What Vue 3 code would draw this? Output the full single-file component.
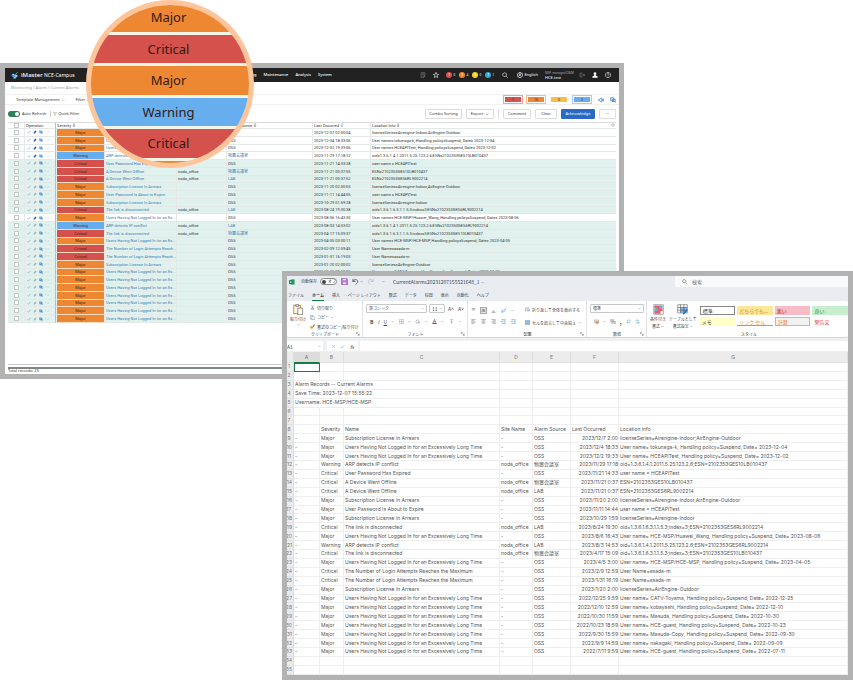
<script setup>
import { h } from 'vue'

// Glyphs on a 16 x 16 grid: [path, fill, stroke, stroke width]
const glyphs = {
  brand: [['M8 7L15 1M8 8L6 15', 'none', '#5bb0f5', 2], ['M5 4a3.5 3.5 0 1 0 .1 0M12 6a3 3 0 1 0 .1 0M9 11a2 2 0 1 0 .1 0', '#8fd0ff', 'none', 0], ['M1 6l5 1-2 5z', '#2f7fe0', 'none', 0]],
  page: [['M3 2h10v9l-3 3H3zM6 5h5M6 8h4M13 11h-3v3', 'none', 'currentColor', 1.3]],
  star: [['M8 1l2 5 5 .4-4 3.4 1.3 5L8 12l-4.300 2.800L5 9.800 1 6.400 6 6z', 'none', 'currentColor', 1.6]],
  search: [['M7 2a5 5 0 1 0 .1 0M11 11l4 4', 'none', 'currentColor', 1.7]],
  globe: [['M8 1a7 7 0 1 0 .1 0M2 13L14 3M4 4l8 9M8 2v5', 'none', 'currentColor', 1.6]],
  exit: [['M9 3H3v10h6M7 8h8M12 5l3 3-3 3', 'none', 'currentColor', 1.3]],
  user: [['M8 1a3.500 3.500 0 0 1 2 6.500L10 9l5 3v3H1v-3l5-3V7.500A3.500 3.500 0 0 1 8 1', 'currentColor', 'none', 0]],
  help: [['M8 1a7 7 0 1 0 .1 0M6 6.500C6 3 10.500 3.500 10.500 6.500 10.500 8 8 8 8 10M8 11.500v1.500', 'none', 'currentColor', 1.5]],
  speaker: [['M2 6h3l4-4v12l-4-4H2zM12 5v6M14.500 4v8', 'none', 'currentColor', 1.7]],
  link: [['M2 2h8v8H2zM6 6h8v6H6zM12 12l3 3', 'none', 'currentColor', 2]],
  funnel: [['M1 2h14L9.500 8v6l-3-2V8z', 'none', 'currentColor', 1.4]],
  down: [['M3 6l5 5 5-5', 'none', 'currentColor', 1.8]],
  sort: [['M8 1v13M4 10l4 4 4-4', 'none', 'currentColor', 2]],
  check: [['M2 9l4 4 8-10', 'none', 'currentColor', 2]],
  broom: [['M9 2l5 4-4 5-3 3-6-1 3-4z', 'currentColor', 'none', 0]],
  mask: [['M2 3h8v8H2zM6 6h7v6H6zM11 12l4 3', 'none', 'currentColor', 2]],
  dots: [['M2 7h2v2H2zM7 7h2v2H7zM12 7h2v2h-2z', 'currentColor', 'none', 0]],
  gear: [['M8 2a6 6 0 1 0 .1 0M8 6a2 2 0 1 0 .1 0', 'none', 'currentColor', 1.5]],
  excel: [['M5 1h10v14H5z', '#21a366', 'none', 0], ['M0 3h9v10H0z', '#107c41', 'none', 0], ['M2.500 5l4 6M6.500 5l-4 6', 'none', '#fff', 1.4]],
  save: [['M1 1h12l2 2v12H1z', '#c58ad8', '#8e44ad', 1.400], ['M4 1h8v5H4zM4 9h8v6H4z', '#f7ecfa', '#8e44ad', 1]],
  undo: [['M2 2v6h6M2 8c4-7 12-5 11 1-.5 3-3 4-5 6', 'none', 'currentColor', 1.7]],
  redo: [['M14 2v6H8M14 8C10 1 2 3 3 9c.5 3 3 4 5 6', 'none', 'currentColor', 1.7]],
  paste: [['M1 2h10v12H1z', '#fff4e3', '#e0963c', 1.500], ['M4 .5h4v3H4z', '#ddd', '#777', 1], ['M7 6h7v9.500H7z', '#fff', '#666', 1]],
  cut: [['M5 1l5 10M11 1L6 11', 'none', '#555', 1.300], ['M5 11a2 2 0 1 0 .1 0M11 11a2 2 0 1 0 .1 0', 'none', '#3a78b8', 1.500]],
  copy: [['M1 1h8v12H1z', '#fff', '#666', 1.300], ['M6 4h6l3 3v8H6z', '#fff', '#3a78b8', 1.400]],
  brush: [['M9 7l5-6 1 2-4 6z', '#777', '#555', 1], ['M2 7l7 0 2 3-5 5-5-3z', '#f0a24a', '#d17a1d', 1]],
  borders: [['M1 1h14v14H1zM8 1v14M1 8h14', 'none', '#888', 1.300]],
  bucket: [['M3 8l5-6 5 6-5 5z', '#fff', '#555', 1.400], ['M13 9l2 4h-3z', '#3a78b8', 'none', 0], ['M1 15h14', 'none', '#e8d36a', 2]],
  fontColor: [['M4 11L8 1l4 10M5.500 8h5', 'none', '#444', 1.600], ['M1 12h14v4H1z', '#e02b2b', 'none', 0]],
  phonetic: [['M4 2h8M8 2v4M4 9h8M8 9v6', 'none', '#777', 1.500]],
  alignTop: [['M2 2h12M4 6h8', 'none', '#555', 1.600]],
  alignMid: [['M2 5h12M4 8h8M2 11h12', 'none', '#555', 1.600]],
  alignBottom: [['M4 10h8M2 14h12', 'none', '#555', 1.600]],
  left: [['M1 2h14M1 6h9M1 10h14M1 14h9', 'none', '#555', 1.500]],
  center: [['M1 2h14M4 6h8M1 10h14M4 14h8', 'none', '#555', 1.500]],
  right: [['M1 2h14M6 6h9M1 10h14M6 14h9', 'none', '#555', 1.500]],
  rotate: [['M2 10a3 3 0 1 0 .1 0M6 4v8M9 13l6-10M15 3l-4 1', 'none', '#3a78b8', 1.500]],
  outdent: [['M1 2h14M8 6h7M8 10h7M1 14h14M6 8H1M3 6L1 8l2 2', 'none', '#3a8bb0', 1.500]],
  wrap: [['M2 2v12M5 3h8M5 7h8c3 0 3 5 0 5H8M10 10l-2 2 2 2', 'none', '#3a78b8', 1.600]],
  merge: [['M1 1h14v14H1z', '#d6e8fa', '#3a78b8', 1.500], ['M1 5h14M1 11h14M4 8h8', 'none', '#3a78b8', 1.400]],
  money: [['M1 3h14v8H1z', '#e9e9e9', '#777', 1.300], ['M6 8h8v7H6z', '#f0a24a', '#c9741c', 1]],
  decUp: [['M5 2v4M9 2v4M3 11h10M6 9l-3 2 3 3M13 2v6', 'none', '#3a8bb0', 1.500]],
  decDown: [['M3 2v5M7 2v5M11 2v5M3 12h10M10 9l3 3-3 3', 'none', '#3a8bb0', 1.500]],
  cond: [['M1 1h14v14H1z', '#fff', '#888', 1], ['M2 2h8v4H2zM6 6h8v4H6zM2 10h9v4H2z', '#e2606a', 'none', 0], ['M10 2h4v4h-4zM2 6h4v4H2z', '#6fa5dc', 'none', 0]],
  tableFmt: [['M1 1h14v12H1z', '#fff', '#777', 1], ['M5 5h10v8H5z', '#7db3e6', 'none', 0], ['M1 5h14M1 9h14M5 1v12M10 1v12', 'none', '#555', .9], ['M9 15l6-7', 'none', '#2b6cb0', 2]],
  launch: [['M2 8V2h6M6 6l7 7M13 7v6H7', 'none', '#555', 1.800]],
  cross: [['M3 3l10 10M13 3L3 13', 'none', '#aaa', 1.500]],
}
const Icon = (props) =>
  h('svg', { viewBox: '0 0 16 16', class: 'icon', 'aria-hidden': 'true' },
    glyphs[props.name].map(([d, fill, stroke, w]) => h('path', { d, fill, stroke, 'stroke-width': w })))
Icon.props = ['name']

const LONG = 'Users Having Not Logged In for an Excessively Long Time'
const LOGIN = 'The Number of Login Attempts Reaches the Maximum'
const SUB = 'Subscription License In Arrears'
const OFFLINE = 'A Device Went Offline'
const LINKDOWN = 'The link is disconnected'
const ROOM = '物置会議室'
const suspend = (user, date) => `User name= ${user}, Handling policy=Suspend, Date= ${date}`

const alarms = [
  ['Major', SUB, '-', 'OSS', '2023-12-07 02:00:04', 'licenseSeries=Airengine-Indoor;AirEngine-Outdoor'],
  ['Major', LONG, '-', 'OSS', '2023-12-04 18:33:06', suspend('tokunaga-k', '2023-12-04')],
  ['Major', LONG, '-', 'OSS', '2023-12-02 19:33:06', suspend('HCEAPITest', '2023-12-02')],
  ['Warning', 'ARP detects IP conflict', 'noda_office', ROOM, '2023-11-29 17:18:12', 'oid=1.3.6.1.4.1.2011.5.25.123.2.6;ESN=2102353GES10LB010437'],
  ['Critical', 'User Password Has Expired', '-', 'OSS', '2023-11-21 14:33:28', 'user name = HCEAPITest'],
  ['Critical', OFFLINE, 'noda_office', ROOM, '2023-11-21 00:37:55', 'ESN=2102353GES10LB010437'],
  ['Critical', OFFLINE, 'noda_office', 'LAB', '2023-11-21 00:37:52', 'ESN=2102353GES6RL9002214'],
  ['Major', SUB, '-', 'OSS', '2023-11-20 02:00:03', 'licenseSeries=Airengine-Indoor,AirEngine-Outdoor'],
  ['Major', 'User Password Is About to Expire', '-', 'OSS', '2023-11-11 14:44:05', 'user name = HCEAPITest'],
  ['Major', SUB, '-', 'OSS', '2023-10-29 01:59:28', 'licenseSeries=Airengine-Indoor'],
  ['Critical', LINKDOWN, 'noda_office', 'LAB', '2023-08-24 19:30:38', 'oid=1.3.6.1.6.3.1.1.5.3;index=3;ESN=2102353GES6RL9002214'],
  ['Major', LONG, '-', 'OSS', '2023-08-06 16:43:30', suspend('HCE-MSP/Huawei_Wang', '2023-08-06')],
  ['Warning', 'ARP detects IP conflict', 'noda_office', 'LAB', '2023-08-03 14:53:02', 'oid=1.3.6.1.4.1.2011.5.25.123.2.6;ESN=2102353GES6RL9002214'],
  ['Critical', LINKDOWN, 'noda_office', ROOM, '2023-04-17 15:09:37', 'oid=1.3.6.1.6.3.1.1.5.3;index=3;ESN=2102353GES10LB010437'],
  ['Major', LONG, '-', 'OSS', '2023-04-05 03:00:11', suspend('HCE-MSP/HCE-MSP', '2023-04-05')],
  ['Critical', LOGIN, '-', 'OSS', '2023-02-09 12:59:45', 'User Name=asada-m'],
  ['Critical', LOGIN, '-', 'OSS', '2023-01-31 16:19:03', 'User Name=asada-m'],
  ['Major', SUB, '-', 'OSS', '2023-01-20 02:00:02', 'licenseSeries=AirEngine-Outdoor'],
  ['Major', LONG, '-', 'OSS', '2022-12-25 09:59:02', suspend('CATV-Toyama', '2022-12-25')],
  ['Major', LONG, '-', 'OSS', '2022-12-10 12:59:02', suspend('kobayashi', '2022-12-10')],
  ['Major', LONG, '-', 'OSS', '2022-10-30 11:59:02', suspend('Masuda', '2022-10-30')],
  ['Major', LONG, '-', 'OSS', '2022-10-23 18:59:02', suspend('HCE-guest', '2022-10-23')],
  ['Major', LONG, '-', 'OSS', '2022-09-30 15:59:02', suspend('Masuda-Copy', '2022-09-30')],
  ['Major', LONG, '-', 'OSS', '2022-09-09 14:59:02', suspend('nakagaki', '2022-09-09')],
  ['Major', LONG, '-', 'OSS', '2022-07-11 09:59:02', suspend('HCE-guest', '2022-07-11')],
].map(([severity, name, site, source, time, info], i) => ({
  severity, name, site, source, time, info,
  acked: i > 3 && i !== 11,
  short: name.length > 34 ? name.slice(0, name === LOGIN ? 34 : 36) + '...' : name,
  sheetTime: time.replace(/^(\d+)-0?(\d+)-0?(\d+) 0?(\d+):(\d+).*/, '$1/$2/$3 $4:$5'),
}))

const counters = [
  { tone: 'critical', n: 7 }, { tone: 'major', n: 16 }, { tone: 'minor', n: 0 }, { tone: 'warning', n: 2 },
]
const alerts = [
  { tone: 'critical', n: 0 }, { tone: 'major', n: 4 }, { tone: 'yellow', n: 0 }, { tone: 'info', n: 1 },
]
const lens = ['Major', 'Critical', 'Major', 'Warning', 'Critical', 'Major']
const tabs = ['ファイル', 'ホーム', '挿入', 'ページ レイアウト', '数式', 'データ', '校閲', '表示', '自動化', 'ヘルプ']
const styles = [
  ['標準', 'plain'], ['どちらでも...', 'neutral'], ['悪い', 'bad'], ['良い', 'good'],
  ['メモ', 'note'], ['リンク セル', 'linked'], ['計算', 'calc'], ['警告文', 'warn'],
]
const intro = { 3: 'Alarm Records -- Current Alarms', 4: 'Save Time: 2023-12-07 15:55:22', 5: 'Username: HCE-MSP/HCE-MSP' }
</script>

<template>
  <main class="stage">
    <section class="window console" aria-label="iMaster NCE-Campus">
      <header class="topbar">
        <Icon name="brand" class="brand-mark" />
        <h1><b>iMaster</b> NCE-Campus</h1>
        <nav>
          <a href="#">Monitoring</a><a href="#">Maintenance</a><a href="#">Analysis</a><a href="#">System</a>
        </nav>
        <div class="tools">
          <Icon name="page" class="dim" />
          <Icon name="star" />
          <span v-for="a in alerts" :key="a.tone" class="alert"><i :class="a.tone">!</i>{{ a.n }}</span>
          <Icon name="search" class="find" />
          <span class="lang"><Icon name="globe" />English</span>
          <span class="tenant"><small>MSP-managed O&amp;M</small>HCE-test</span>
          <Icon name="exit" class="dim" />
          <Icon name="user" class="me" />
          <Icon name="help" />
        </div>
      </header>
      <p class="crumbs">Monitoring / Alarm / Current Alarms</p>
      <div class="filters">
        <button class="text-btn">Template Management <Icon name="down" /></button>
        <button class="text-btn">Filter <Icon name="down" /></button>
        <div class="counters">
          <button v-for="c in counters" :key="c.tone" :class="['counter', c.tone]"><span>{{ c.n }}</span></button>
          <Icon name="speaker" class="blue" />
          <Icon name="link" class="blue" />
        </div>
      </div>
      <div class="toolbar">
        <label class="refresh"><input type="checkbox" class="switch" checked />Auto Refresh</label>
        <button class="text-btn quick"><Icon name="funnel" /> Quick Filter</button>
        <div class="actions">
          <button class="btn wide">Combo Sorting</button>
          <button class="btn mid">Export <Icon name="down" /></button>
          <span class="rule"></span>
          <button class="btn mid">Comment</button>
          <button class="btn small">Clear</button>
          <button class="btn primary">Acknowledge</button>
          <button class="btn tiny">···</button>
        </div>
      </div>
      <table class="alarms">
        <colgroup><col class="c-check" /><col class="c-op" /><col class="c-sev" /><col class="c-name" /><col class="c-site" /><col class="c-src" /><col class="c-time" /><col /></colgroup>
        <thead>
          <tr>
            <th><input type="checkbox" aria-label="All" /></th>
            <th>Operation</th>
            <th>Severity <Icon name="sort" /></th>
            <th>Name</th>
            <th>Site Name</th>
            <th>Alarm Source <Icon name="sort" /></th>
            <th>Last Occurred <Icon name="sort" class="blue" /></th>
            <th><div class="last-head">Location Info <Icon name="sort" /><Icon name="gear" class="gear" /></div></th>
          </tr>
        </thead>
        <tbody>
          <tr v-for="(r, i) in alarms" :key="i" :class="{ acked: r.acked }">
            <td class="mid-cell"><input type="checkbox" :aria-label="r.name" /></td>
            <td>
              <div class="ops"><Icon name="check" /><Icon name="broom" class="broom" /><Icon name="mask" class="blue" /><Icon name="dots" /></div>
            </td>
            <td :class="['sev', r.severity.toLowerCase()]">{{ r.severity }}</td>
            <td><a href="#">{{ r.short }}</a></td>
            <td>{{ r.site === '-' ? '' : r.site }}</td>
            <td><a v-if="r.source !== 'OSS'" href="#">{{ r.source }}</a><template v-else>OSS</template></td>
            <td>{{ r.time }}</td>
            <td>{{ r.info }}</td>
          </tr>
        </tbody>
      </table>
      <footer>Total records: 25</footer>
    </section>

    <section class="window excel" aria-label="CurrentAlarms">
      <header class="titlebar">
        <Icon name="excel" />
        <label class="autosave">自動保存<span class="pill"><input type="checkbox" class="dot" />オフ</span></label>
        <Icon name="save" class="lg" />
        <Icon name="undo" class="lg" />
        <Icon name="down" class="xs" />
        <Icon name="redo" class="lg faint" />
        <Icon name="down" class="xs more" />
        <h2>CurrentAlarms20231207155521648_1 <Icon name="down" class="xs" /></h2>
        <label class="find-box"><Icon name="search" /><input type="search" placeholder="検索" aria-label="検索" /></label>
      </header>
      <nav class="tabs">
        <a v-for="t in tabs" :key="t" href="#" :class="{ on: t === 'ホーム' }">{{ t }}</a>
      </nav>
      <div class="ribbon">
        <div class="group clip">
          <div class="body">
            <button class="stack"><Icon name="paste" class="big" />貼り付け<Icon name="down" class="xs" /></button>
            <div class="lines">
              <button><Icon name="cut" />切り取り</button>
              <button><Icon name="copy" />コピー <Icon name="down" class="xs" /></button>
              <button><Icon name="brush" />書式のコピー/貼り付け</button>
            </div>
          </div>
          <div class="caption">クリップボード<Icon name="launch" /></div>
        </div>
        <div class="group font">
          <div class="body rows">
            <div class="row">
              <label class="combo name"><select aria-label="フォント"><option>游ゴシック</option></select><Icon name="down" class="xs" /></label>
              <label class="combo size"><select aria-label="サイズ"><option>11</option></select><Icon name="down" class="xs" /></label>
              <button class="grow">A˄</button><button class="grow">A˅</button>
            </div>
            <div class="row spread">
              <button><b>B</b></button><button><i>I</i></button><button><u>U</u></button><Icon name="down" class="xs" />
              <Icon name="borders" /><Icon name="down" class="xs" /><Icon name="bucket" /><Icon name="down" class="xs" />
              <Icon name="fontColor" /><Icon name="down" class="xs" /><Icon name="phonetic" /><Icon name="down" class="xs" />
            </div>
          </div>
          <div class="caption">フォント<Icon name="launch" /></div>
        </div>
        <div class="group align">
          <div class="body">
            <div class="pad">
              <Icon name="alignTop" /><Icon name="alignMid" class="active" /><Icon name="alignBottom" /><Icon name="rotate" /><Icon name="down" class="xs" />
              <Icon name="left" /><Icon name="center" /><Icon name="right" /><Icon name="outdent" /><Icon name="outdent" />
            </div>
            <div class="lines wide-lines">
              <button><Icon name="wrap" />折り返して全体を表示する</button>
              <button><Icon name="merge" />セルを結合して中央揃え <Icon name="down" class="xs" /></button>
            </div>
          </div>
          <div class="caption">配置<Icon name="launch" /></div>
        </div>
        <div class="group num">
          <div class="body rows">
            <div class="row">
              <label class="combo name"><select aria-label="数値の書式"><option>標準</option></select><Icon name="down" class="xs" /></label>
            </div>
            <div class="row spread"><Icon name="money" /><Icon name="down" class="xs" /><button class="sym">%</button><button class="sym"><b>,</b></button><Icon name="decUp" /><Icon name="decDown" /></div>
          </div>
          <div class="caption">数値<Icon name="launch" /></div>
        </div>
        <div class="group style">
          <div class="body">
            <button class="stack"><Icon name="cond" class="big" /><span>条件付き</span><span>書式 <Icon name="down" class="xs" /></span></button>
            <button class="stack"><Icon name="tableFmt" class="big" /><span>テーブルとして</span><span>書式設定 <Icon name="down" class="xs" /></span></button>
            <div class="gallery">
              <button v-for="[label, cls] in styles" :key="label" :class="cls">{{ label }}</button>
            </div>
          </div>
          <div class="caption">スタイル</div>
        </div>
      </div>
      <div class="formula">
        <label class="cellref"><input value="A1" aria-label="名前ボックス" /><Icon name="down" class="xs" /></label>
        <span class="fx"><Icon name="cross" /><Icon name="check" class="tick" /><i>fx</i></span>
        <input class="expr" aria-label="数式バー" />
      </div>
      <table class="sheet">
        <colgroup><col class="s-n" /><col class="s-a" /><col class="s-b" /><col class="s-c" /><col class="s-d" /><col class="s-e" /><col class="s-f" /><col /></colgroup>
        <thead>
          <tr><th></th><th v-for="c in 'ABCDEFG'" :key="c" :class="{ on: c === 'A' }">{{ c }}</th></tr>
        </thead>
        <tbody>
          <tr v-for="n in 7" :key="n">
            <th>{{ n }}</th>
            <td :class="{ cursor: n === 1, blank: intro[n] }">{{ intro[n] }}</td>
            <td v-for="k in 6" :key="k" :class="{ blank: intro[n] && k < 2 }"></td>
          </tr>
          <tr><th>8</th><td></td><td>Severity</td><td>Name</td><td>Site Name</td><td>Alarm Source</td><td>Last Occurred</td><td>Location Info</td></tr>
          <tr v-for="(r, i) in alarms" :key="'r' + i">
            <th>{{ i + 9 }}</th><td>-</td><td>{{ r.severity }}</td><td>{{ r.name }}</td><td>{{ r.site }}</td><td>{{ r.source }}</td><td class="when">{{ r.sheetTime }}</td><td>{{ r.info }}</td>
          </tr>
          <tr v-for="n in 2" :key="'e' + n"><th>{{ n + 33 }}</th><td v-for="k in 7" :key="k"></td></tr>
        </tbody>
      </table>
    </section>

    <div class="lens">
      <div class="lens-rows">
        <span v-for="(s, i) in lens" :key="i" :class="s.toLowerCase()">{{ s }}</span>
      </div>
    </div>
  </main>
</template>

<style>
body { margin: 0; background: #fff; }
</style>

<style scoped>
.stage { position: relative; min-height: 680px; overflow: hidden; font-family: "Noto Sans", "Noto Sans CJK JP", sans-serif; font-size: 4px; line-height: 6px; color: #333; }
.stage :deep(*) { box-sizing: border-box; }
h1, h2, p { margin: 0; font-weight: 400; }
a { color: inherit; text-decoration: none; }
button, input, select { font: inherit; color: inherit; margin: 0; padding: 0; border: 0; background: none; appearance: none; outline: none; }
button { display: inline-flex; align-items: center; justify-content: center; white-space: nowrap; }
:deep(.icon) { width: 5px; height: 5px; flex: none; }
:deep(.icon.xs) { width: 3px; height: 3px; }
:deep(.icon.blue) { color: #2f78c8; }

.window { position: absolute; border: 5px solid #b2b2b2; background: #fff; overflow: hidden; }
.console { left: 0; right: 229px; top: 63px; }
.excel { left: 282px; right: 0; top: 271px; }

.critical { background-color: #d5524c; }
.major { background-color: #ee8732; }
.warning { background-color: #66aeee; }
.minor { background-color: #f8be4c; }

/* console */
.topbar { display: flex; align-items: center; height: 14px; padding: 0 8px 0 6px; background: #212121; color: #fff; }
.topbar :deep(.icon) { width: 6px; height: 6px; }
.topbar :deep(.brand-mark) { width: 7px; height: 7px; margin-right: 3px; }
.topbar h1 { font-size: 5px; white-space: nowrap; width: 214px; }
.topbar h1 b { font-size: 6px; font-weight: 500; }
.topbar nav { display: flex; gap: 7px; font-weight: 500; }
.tools { display: flex; align-items: center; gap: 7px; margin-left: auto; }
.tools :deep(.dim) { opacity: .55; }
.alert { display: flex; align-items: center; width: 6px; gap: 1px; font-size: 3px; }
.alert i { flex: none; width: 6px; height: 6px; border-radius: 50%; font-style: normal; font-weight: 700; font-size: 4px; text-align: center; color: #fff; }
.alert .yellow { background: #f5d327; }
.alert .info { background: #2fa8dc; }
.tools :deep(.find) { margin-left: 4px; }
.lang { display: flex; align-items: center; gap: 1px; margin-left: 2px; }
.tenant { display: flex; flex-direction: column; line-height: 5px; white-space: nowrap; width: 27px; }
.tenant small { font-size: 3px; line-height: 4px; color: #aaa; }
.crumbs { height: 12px; padding: 0 6px; line-height: 12px; color: #999; }
.filters { display: flex; align-items: center; height: 11px; padding: 0 3px 0 11px; gap: 11px; border-top: 1px solid #f1f1f1; border-bottom: 1px solid #f1f1f1; }
.text-btn { gap: 1px; }
.text-btn :deep(.icon) { width: 4px; height: 4px; color: #777; }
.counters { display: flex; align-items: center; gap: 3px; margin-left: auto; }
.counters :deep(.icon) { width: 6px; height: 6px; margin-left: 3px; }
.counter { width: 20px; height: 9px; padding: 1px; border: 1px solid #fff; background-clip: content-box; }
.counter span { line-height: 5px; }
.counter.critical { border-color: #e9a5a1; }
.counter.major { border-color: #f5bd8c; }
.counter.warning { border-color: #a5cff5; }
.toolbar { display: flex; align-items: center; height: 17px; padding: 0 3px; }
.refresh { display: flex; align-items: center; gap: 2px; padding-right: 4px; border-right: 1px solid #ccc; }
.switch { position: relative; width: 12px; height: 6px; border-radius: 3px; background: #2e7d5b; }
.switch::after { content: ""; position: absolute; right: 1px; top: 1px; width: 4px; height: 4px; border-radius: 50%; background: #fff; }
.quick { padding-left: 2px; }
.actions { display: flex; align-items: center; gap: 4px; margin-left: auto; }
.btn { height: 10px; border: 1px solid #ddd; border-radius: 1px; gap: 2px; }
.btn :deep(.icon) { width: 4px; height: 4px; }
.wide { width: 37px; }
.mid { width: 28px; }
.small { width: 22px; }
.tiny { width: 17px; }
.primary { width: 34px; background: #2a69c4; border-color: #2a69c4; color: #fff; }
.rule { width: 1px; height: 10px; background: #ddd; }

.alarms { width: calc(100% - 6px); height: 201px; margin: 0 3px; table-layout: fixed; border-collapse: separate; border-spacing: 0; border-top: 1px solid #ddd; line-height: 5px; font-family: Roboto, "Noto Sans CJK JP", sans-serif; }
.c-check { width: 17px; }
.c-op { width: 31px; }
.c-sev { width: 49px; }
.c-name { width: 72px; }
.c-site { width: 50px; }
.c-src { width: 86px; }
.c-time { width: 58px; }
.alarms th, .alarms td { padding: 0 1px; text-align: left; font-weight: 400; white-space: nowrap; overflow: hidden; border-bottom: 1px solid #e2e9e7; border-right: 1px solid #e2e9e7; }
.alarms th:nth-child(2), .alarms td:nth-child(2) { border-right-color: #bbb; }
.alarms th:last-child, .alarms td:last-child { border-right: 0; }
.alarms th:first-child, .alarms .mid-cell { text-align: center; }
.alarms th, .alarms .mid-cell { line-height: 0; }
.alarms th { line-height: 5px; }
.alarms th :deep(.icon) { width: 4px; height: 4px; vertical-align: top; }
.last-head { display: flex; gap: 1px; }
.last-head :deep(.gear) { margin-left: auto; color: #888; }
.alarms input { display: inline-block; vertical-align: top; width: 5px; height: 5px; border: 1px solid #c4c9c8; background: #fff; }
.alarms .acked { background: #e1f2ee; }
.alarms a { color: #3a7db5; }
.ops { display: flex; align-items: center; gap: 2px; padding-left: 1px; color: #5b8fc7; }
.ops :deep(.icon) { width: 4px; height: 4px; }
.ops :deep(.broom) { color: #1c5cb8; }
.acked .ops :deep(.broom) { color: #9db3c4; }
.alarms td.sev { text-align: center; color: #4a2418; border-left: 1px solid #e1f2ee; border-bottom-color: #f5dcc4; }
.console footer { height: 10px; margin: 41px 3px 0; padding-top: 4px; white-space: nowrap; background: linear-gradient(#ccc 1px, transparent 1px 3px, #7d8784 3px 5px, transparent 5px); }

/* spreadsheet */
.excel { background: #e9edf1; font-family: "Noto Sans CJK JP", sans-serif; font-size: 5px; line-height: 7px; color: #444; }
.titlebar { display: flex; align-items: center; height: 11px; padding-left: 2px; }
.titlebar h2 { font-size: 5px; }
.titlebar > :deep(.icon) { width: 6px; height: 6px; }
.titlebar > :deep(.lg) { width: 7px; height: 7px; margin-left: 4px; }
.titlebar > :deep(.xs) { width: 3px; height: 3px; margin-left: 1px; }
.titlebar > :deep(.more) { margin: 0 8px; }
.titlebar :deep(.faint) { color: #bbb; }
.autosave { display: flex; align-items: center; gap: 3px; padding-left: 6px; font-size: 4px; }
.pill { display: flex; align-items: center; gap: 2px; width: 17px; height: 7px; padding-left: 1px; border: 1px solid #888; border-radius: 4px; background: #fff; }
.dot { width: 4px; height: 4px; border-radius: 50%; background: #444; }
.find-box { display: flex; align-items: center; gap: 5px; width: 173px; height: 11px; margin-left: auto; padding-left: 7px; background: #f8fafb; }
.find-box input { flex: 1; min-width: 0; }
.tabs { display: flex; gap: 8px; height: 14px; align-items: center; padding: 4px 1px 0; white-space: nowrap; font-size: 4px; }
.tabs a { height: 9px; }
.tabs .on { font-weight: 700; border-bottom: 1px solid #107c41; }
.ribbon { display: flex; height: 37px; background: #fff; border-radius: 2px; border-bottom: 1px solid #d5d8da; }
.group { display: flex; flex-direction: column; justify-content: space-between; padding: 3px 2px 0 3px; border-right: 1px solid #e2e2e2; }
.group:last-child { border-right: 0; padding-right: 0; flex: 1; min-width: 0; overflow: hidden; }
.body { display: flex; height: 26px; }
.caption { display: flex; justify-content: center; font-size: 4px; line-height: 6px; position: relative; }
.caption :deep(.icon) { position: absolute; right: 0; top: 1px; width: 4px; height: 4px; }
.clip { width: 76px; }
.font { width: 105px; }
.align { width: 119px; }
.num { width: 60px; }
.stack { flex-direction: column; justify-content: flex-start; gap: 1px; font-size: 4px; line-height: 6px; }
.stack :deep(.big) { width: 11px; height: 11px; }
.lines { display: flex; flex-direction: column; justify-content: space-between; align-items: flex-start; padding-left: 4px; font-size: 4px; line-height: 6px; }
.lines button { gap: 2px; height: 7px; }
.lines.wide-lines { padding: 2px 0 4px 8px; }
.rows { flex-direction: column; gap: 4px; }
.row { display: flex; align-items: center; gap: 2px; height: 9px; }
.spread { justify-content: space-between; padding: 0 4px; }
.combo { display: flex; align-items: center; height: 9px; padding: 0 2px; border: 1px solid #c9c9c9; border-radius: 1px; background: #fff; }
.combo select { flex: 1; min-width: 0; }
.combo.name { flex: 1; font-size: 4px; }
.combo.size { width: 16px; }
.grow { width: 8px; }
.sym { font-size: 6px; }
.pad { display: grid; grid-template-columns: repeat(5, 6px); gap: 6px 4px; align-content: center; align-items: center; height: 24px; }
.pad :deep(.active) { background: #e5e5e5; outline: 1px solid #aaa; }
.style .body { gap: 3px; }
.gallery { display: grid; grid-template-columns: repeat(4, 1fr); gap: 2px; flex: 1; min-width: 0; align-content: start; padding-top: 2px; }
.gallery button { justify-content: flex-start; height: 9px; padding-left: 2px; }
.plain { border: 1px solid #888; }
.neutral { background: #ffe79a; color: #b98a2a; }
.bad { background: #f7bcc6; color: #b03a48; }
.good { background: #c6efce; color: #2f8a4a; }
.note { background: #ffffc8; }
.linked { color: #f08a3c; border-bottom: 1px solid #f08a3c; }
.calc { background: #f2f2f2; border: 1px solid #bbb; color: #f07d1e; }
.warn { color: #e0443c; }
.formula { display: flex; height: 14px; padding: 3px 0 1px; background: #eef0f2; align-items: stretch; }
.cellref { display: flex; align-items: center; width: 36px; background: #fff; }
.cellref input { width: 31px; }
.fx { display: flex; align-items: center; justify-content: space-between; width: 31px; margin: 0 2px 0 4px; padding: 0 4px; background: #fff; }
.fx :deep(.tick) { color: #aaa; }
.expr { flex: 1; min-width: 0; background: #fff; }

.sheet { width: 100%; height: 323px; table-layout: fixed; border-collapse: separate; border-spacing: 0; background: #fff; line-height: 7px; font-family: Inter, "Noto Sans CJK JP", sans-serif; color: #555; }
.s-n { width: 7px; }
.s-a { width: 26px; }
.s-b { width: 24px; }
.s-c { width: 156px; }
.s-d { width: 33px; }
.s-e { width: 38px; }
.s-f { width: 48px; }
.sheet td { padding: 0 0 0 1px; white-space: nowrap; border-right: 1px solid #eee; border-bottom: 1px solid #eee; }
.sheet td.blank { border-right-color: transparent; }
.sheet td.when { text-align: right; padding: 0; }
.sheet th { padding: 0; font-weight: 400; color: #777; background: #ececec; border-right: 1px solid #ddd; border-bottom: 1px solid #e2e2e2; }
.sheet thead th { height: 11px; }
.sheet thead .on { background: #dcdcdc; border-bottom-color: #107c41; }
.sheet tbody th { direction: rtl; padding-right: 2px; overflow: hidden; }
.sheet .cursor { outline: 1px solid #1f7a4d; outline-offset: -1px; }

/* magnifier */
.lens { position: absolute; left: 86px; top: 0; width: 168px; height: 168px; border: 5px solid #ffc499; border-radius: 50%; overflow: hidden; background: #f3f6e6; }
.lens-rows { display: grid; grid-auto-rows: 1fr; gap: 3px; height: 186px; margin-top: -2px; }
.lens-rows span { display: flex; align-items: center; justify-content: center; padding-right: 3px; font-size: 13px; line-height: 18px; color: #321a12; }
</style>
